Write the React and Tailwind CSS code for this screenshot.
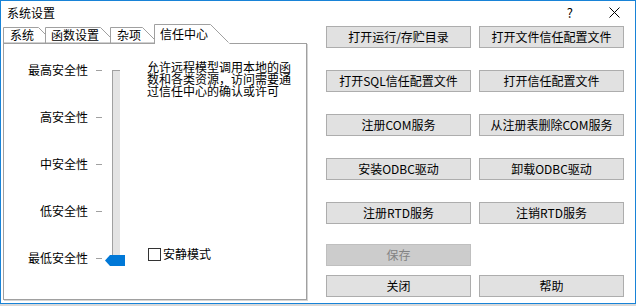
const buttonRows = [
  ['打开运行/存贮目录', '打开文件信任配置文件'],
  ['打开SQL信任配置文件', '打开信任配置文件'],
  ['注册COM服务', '从注册表删除COM服务'],
  ['安装ODBC驱动', '卸载ODBC驱动'],
  ['注册RTD服务', '注销RTD服务'],
];

const levels = ['最高安全性', '高安全性', '中安全性', '低安全性', '最低安全性'];

function Tab({ label, width, top, pad }) {
  return (
    <div className="relative h-[16px]" style={{ width }}>
      <svg className="absolute left-0 top-0 overflow-visible" width={width + 14} height="16">
        <path
          d={`M0.5,16 V0.5 H${top}.5 L${top + 15}.5,15.5 V16 Z`}
          fill="#ffffff"
          stroke="#a0a0a0"
          strokeWidth="1"
        />
      </svg>
      <span className="relative block leading-[16px]" style={{ paddingLeft: pad }}>
        {label}
      </span>
    </div>
  );
}

function Btn({ children, disabled }) {
  return (
    <div
      className={
        disabled
          ? 'flex h-[22px] w-[145px] items-center justify-center border border-[#bfbfbf] bg-[#cccccc] text-[#838383]'
          : 'flex h-[22px] w-[145px] items-center justify-center border border-[#adadad] bg-[#e1e1e1] text-black'
      }
    >
      {children}
    </div>
  );
}

export default function App() {
  return (
    <div className="h-[306px] w-[640px] bg-white font-['Noto_Sans_CJK_SC',sans-serif] text-[12px] text-black">
      <div className="flex h-[304px] w-[636px] flex-col border border-[#1883d7] bg-white">
        {/* title bar */}
        <div className="flex h-[23px] items-center pl-[6px]">
          <span className="leading-[14px]">系统设置</span>
          <span className="ml-auto text-[13px] leading-[14px]">?</span>
          <svg className="ml-[36px] mr-[15px]" width="11" height="11" viewBox="0 0 11 11">
            <path d="M0.5,0.5 L10.5,10.5 M10.5,0.5 L0.5,10.5" stroke="#000" strokeWidth="1" />
          </svg>
        </div>

        <div className="flex pl-[2px]">
          {/* left: tabs + panel */}
          <div className="w-[304px]">
            <div className="relative z-10 flex h-[19px] items-end">
              <Tab label="系统" width={42} top={35} pad={7} />
              <Tab label="函数设置" width={65} top={55} pad={6} />
              <Tab label="杂项" width={44} top={32} pad={7} />
              <div className="relative mb-[-1px] h-[20px] w-[74px]">
                <svg className="absolute left-0 top-0 overflow-visible" width="76" height="20">
                  <path d="M0.5,20 V0.5 H56.5 L75.5,19.5 V20 Z" fill="#ffffff" stroke="none" />
                  <path d="M0.5,20 V0.5 H56.5 L74.5,18.5" fill="none" stroke="#a0a0a0" strokeWidth="1" />
                </svg>
                <span className="relative block pl-[6px] pt-[2px] leading-[16px]">信任中心</span>
              </div>
            </div>

            <div className="flex h-[257px] border border-[#a0a0a0] shadow-[1px_1px_0_#d4d4d4]">
              <div className="flex w-[98px] flex-col gap-[33px] pt-[19px]">
                {levels.map((l) => (
                  <div key={l} className="flex h-[14px] items-center justify-end">
                    <span className="leading-[14px]">{l}</span>
                    <span className="ml-[8px] h-px w-[6px] bg-[#a0a0a0]" />
                  </div>
                ))}
              </div>

              <div className="relative ml-[10px] mt-[26px] h-[192px] w-[8px] border-l border-t border-[#a0a0a0] bg-[#e3e3e3]">
                <svg className="absolute left-[-8px] top-[184px]" width="20" height="11" viewBox="0 0 20 11">
                  <polygon points="0,5.5 5,0 20,0 20,11 5,11" fill="#0078d7" />
                </svg>
              </div>

              <div className="ml-[27px] flex flex-col pt-[17px]">
                <p className="w-[145px] leading-[12px]">
                  允许远程模型调用本地的函数和各类资源，访问需要通过信任中心的确认或许可
                </p>
                <div className="ml-[1px] mt-[150px] flex items-center">
                  <span className="h-[13px] w-[13px] border border-[#333333] bg-white" />
                  <span className="ml-[2px] leading-[14px]">安静模式</span>
                </div>
              </div>
            </div>
          </div>

          {/* right: buttons */}
          <div className="ml-[19px] flex flex-col pt-[2px]">
            {buttonRows.map((row, i) => (
              <div key={i} className={i === 0 ? 'flex gap-[8px]' : 'mt-[22px] flex gap-[8px]'}>
                <Btn>{row[0]}</Btn>
                <Btn>{row[1]}</Btn>
              </div>
            ))}
            <div className="mt-[20px] flex gap-[8px]">
              <Btn disabled>保存</Btn>
            </div>
            <div className="mt-[9px] flex gap-[8px]">
              <Btn>关闭</Btn>
              <Btn>帮助</Btn>
            </div>
          </div>
        </div>
      </div>
      <div className="h-[2px] w-[636px] bg-[#d9d9d9]" />
    </div>
  );
}
